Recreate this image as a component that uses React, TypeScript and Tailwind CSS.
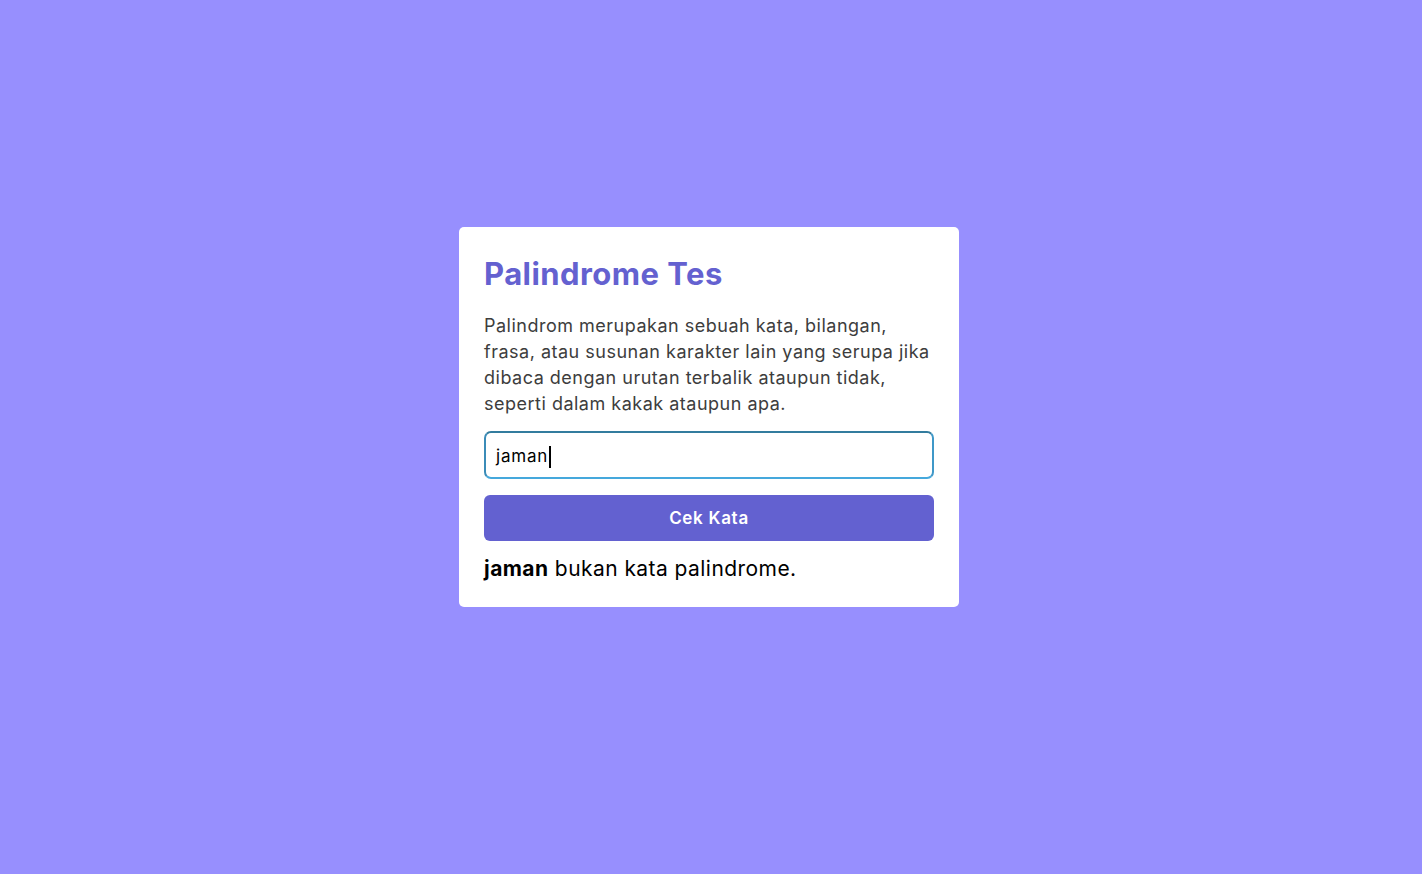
import React from "react";

export default function App() {
  return (
    <div
      className="min-h-screen w-full bg-[#978ffe] flex items-center justify-center pb-[40px] pr-[4px]"
      style={{ fontFamily: "Inter, 'Open Sans', sans-serif" }}
    >
      <div className="w-[500px] bg-white rounded-[5px] px-[25px] pt-[27px] pb-[23px]">
        <h1 className="text-[31px] leading-[40px] font-bold text-[#6461d0] tracking-[0.45px]">
          Palindrome Tes
        </h1>
        <p className="mt-[19px] text-[18px] leading-[26px] text-[#3d3d3d] tracking-[0.5px]">
          Palindrom merupakan sebuah kata, bilangan, frasa, atau susunan karakter lain yang serupa jika dibaca
          dengan urutan terbalik ataupun tidak, seperti dalam kakak ataupun apa.
        </p>
        <div className="mt-[14px] h-[48px] rounded-[7px] border-2 border-[#45a8dc] border-t-[#327c9e] border-l-[#3b8cb8] border-r-[#3f98c8] flex items-center px-[10px] pt-[3px]">
          <span className="text-[17px] text-black tracking-[0.8px]">jaman</span>
          <span className="w-[2px] h-[22px] bg-black ml-[1px]" />
        </div>
        <button className="mt-[16px] w-full h-[46px] rounded-[6px] bg-[#6361d0] text-white text-[17px] font-semibold tracking-[0.7px] pt-[2px]">
          Cek Kata
        </button>
        <p className="mt-[13px] text-[21px] leading-[30px] text-black tracking-[0.44px]">
          <span className="font-bold">jaman</span> bukan kata palindrome.
        </p>
      </div>
    </div>
  );
}
